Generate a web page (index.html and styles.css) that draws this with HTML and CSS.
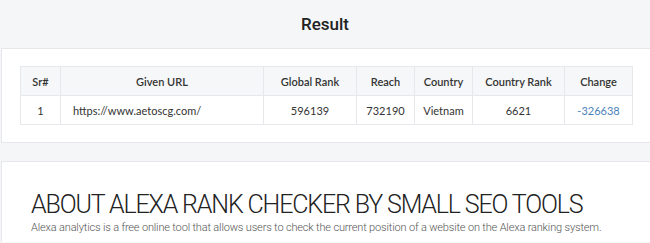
FILE: index.html
```html
<!DOCTYPE html>
<html>
<head>
<meta charset="utf-8">
<link rel="stylesheet" href="styles.css">
</head>
<body>
<header class="result-head">Result</header>
<section class="card result-card">
  <table class="rank-table">
    <colgroup>
      <col class="c-sr"><col class="c-url"><col class="c-global"><col class="c-reach"><col class="c-country"><col class="c-crank"><col class="c-change">
    </colgroup>
    <thead>
      <tr><th>Sr#</th><th>Given URL</th><th>Global Rank</th><th>Reach</th><th>Country</th><th>Country Rank</th><th>Change</th></tr>
    </thead>
    <tbody>
      <tr><td>1</td><td class="url">https://www.aetoscg.com/</td><td>596139</td><td>732190</td><td>Vietnam</td><td>6621</td><td class="change">-326638</td></tr>
    </tbody>
  </table>
</section>
<section class="card about-card">
  <h2 class="about-title">ABOUT ALEXA RANK CHECKER BY SMALL SEO TOOLS</h2>
  <p class="about-text">Alexa analytics is a free online tool that allows users to check the current position of a website on the Alexa ranking system.</p>
</section>
</body>
</html>
```
FILE: styles.css
```css
html, body { margin: 0; padding: 0; }
body {
  background: #f5f6f8;
  font-family: "Lato", "Open Sans", sans-serif;
  color: #333;
  width: 650px;
  height: 243px;
  overflow: hidden;
}
.result-head {
  height: 48px;
  display: flex;
  align-items: center;
  justify-content: center;
  font-family: "Roboto", sans-serif;
  font-weight: 500;
  font-size: 17px;
  color: #222;
}
.card {
  background: #fff;
  margin-left: 1px;
  border-top: 1px solid #e5e7ea;
  border-left: 1px solid #e5e7ea;
  border-bottom: 1px solid #e5e7ea;
}
.result-card {
  padding: 17px 0 17px 18px;
}
.rank-table {
  border-collapse: collapse;
  table-layout: fixed;
  width: 612px;
  font-size: 11px;
  color: #333;
}
.c-sr { width: 40px; }
.c-url { width: 203px; }
.c-global { width: 93px; }
.c-reach { width: 58px; }
.c-country { width: 58px; }
.c-crank { width: 92px; }
.c-change { width: 68px; }
.rank-table th, .rank-table td {
  border: 1px solid #e6e8eb;
  height: 28px;
  padding: 0;
  text-align: center;
  white-space: nowrap;
}
.rank-table th {
  background: #f6f7f9;
  font-weight: 600;
  color: #333;
}
.rank-table td.url {
  text-align: left;
  padding-left: 12px;
}
.rank-table td.change { color: #4b82b8; }
.about-card {
  margin-top: 18px;
  border-bottom: none;
  padding: 28px 0 0 29px;
  height: 52px;
}
.about-title {
  margin: 0;
  font-family: "Roboto", sans-serif;
  font-weight: 300;
  font-size: 25px;
  line-height: 30px;
  letter-spacing: -1.15px;
  color: #222;
}
.about-text {
  margin: 1px 0 0;
  font-family: "Roboto", sans-serif;
  font-size: 11px;
  font-weight: 300;
  letter-spacing: -0.16px;
  color: #555;
}
```
